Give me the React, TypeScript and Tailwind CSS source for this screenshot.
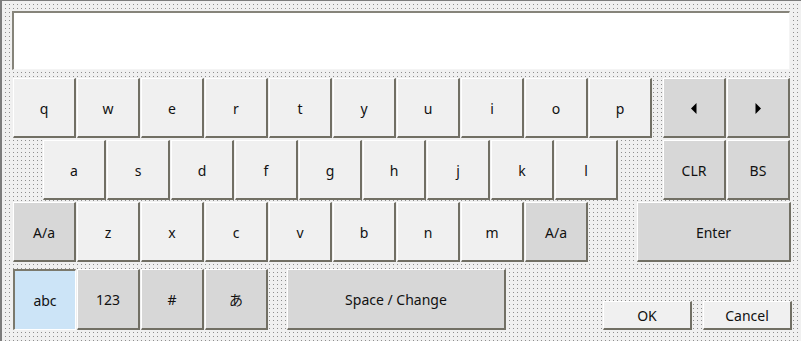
import React from "react";

type KeyProps = {
  label?: React.ReactNode;
  w?: string;
  h?: string;
  tone?: "light" | "dark" | "active";
  className?: string;
};

const Key = ({ label, w = "w-[63px]", h = "h-[60px]", tone = "light", className = "" }: KeyProps) => {
  const fill =
    tone === "dark" ? "bg-[#d7d7d7]" : tone === "active" ? "bg-[#cce4f7]" : "bg-[#f0f0f0]";
  const edge =
    tone === "active"
      ? "border-t-2 border-l-2 border-b border-r border-t-[#7b796d] border-l-[#7b796d] border-b-white border-r-white"
      : "border-t border-l border-b-2 border-r-2 border-t-white border-l-white border-b-[#716f64] border-r-[#716f64]";
  return (
    <div
      className={`${w} ${h} ${fill} ${edge} ${className} shrink-0 flex items-center justify-center pt-[1px] text-[14px] text-[#111]`}
    >
      {label}
    </div>
  );
};

const Arrow = ({ dir }: { dir: "left" | "right" }) => (
  <svg width="6" height="11" viewBox="0 0 6 11">
    {dir === "left" ? <polygon points="5.5,0 5.5,11 0,5.5" fill="#000" /> : <polygon points="0.5,0 0.5,11 6,5.5" fill="#000" />}
  </svg>
);

const row1 = ["q", "w", "e", "r", "t", "y", "u", "i", "o", "p"];
const row2 = ["a", "s", "d", "f", "g", "h", "j", "k", "l"];
const row3 = ["z", "x", "c", "v", "b", "n", "m"];

export default function App() {
  return (
    <div
      className="w-[801px] h-[341px] overflow-hidden border-l-2 border-t border-[#7c7c7c] bg-[#f0f0f0] bg-[linear-gradient(to_right,#f0f0f0_3px,transparent_3px),linear-gradient(to_bottom,#f0f0f0_3px,#8e8e8e_3px)] bg-[length:4px_4px]"
      style={{ fontFamily: '"Noto Sans", "Noto Sans CJK JP", sans-serif' }}
    >
      <div className="pl-[10px] pt-[10px]">
        <div className="w-[778px] h-[59px] bg-white border-t-2 border-l-2 border-b border-r border-t-[#86847a] border-l-[#86847a] border-b-[#f4f4f4] border-r-[#f4f4f4]" />
      </div>

      <div className="flex pl-[11px] pt-[8px]">
        <div className="flex gap-[1px]">
          {row1.map((k) => (
            <Key key={k} label={k} />
          ))}
        </div>
        <div className="flex gap-[1px] ml-[11px]">
          <Key tone="dark" label={<Arrow dir="left" />} />
          <Key tone="dark" label={<Arrow dir="right" />} />
        </div>
      </div>

      <div className="flex pl-[41px] pt-[2px]">
        <div className="flex gap-[1px]">
          {row2.map((k) => (
            <Key key={k} label={k} />
          ))}
        </div>
        <div className="flex gap-[1px] ml-[45px]">
          <Key tone="dark" label="CLR" />
          <Key tone="dark" label="BS" />
        </div>
      </div>

      <div className="flex pl-[11px] pt-[2px]">
        <div className="flex gap-[1px]">
          <Key tone="dark" label="A/a" />
          {row3.map((k) => (
            <Key key={k} label={k} />
          ))}
          <Key tone="dark" label="A/a" />
        </div>
        <Key tone="dark" label="Enter" w="w-[154px]" className="ml-[49px]" />
      </div>

      <div className="flex items-end pl-[11px] pt-[7px]">
        <div className="flex gap-[1px]">
          <Key tone="active" label="abc" h="h-[61px]" />
          <Key tone="dark" label="123" h="h-[61px]" />
          <Key tone="dark" label="#" h="h-[61px]" />
          <Key tone="dark" label="あ" h="h-[61px]" />
        </div>
        <Key tone="dark" label="Space / Change" w="w-[219px]" h="h-[61px]" className="ml-[19px]" />
        <Key label="OK" w="w-[89px]" h="h-[29px]" className="ml-[97px]" />
        <Key label="Cancel" w="w-[89px]" h="h-[29px]" className="ml-[11px]" />
      </div>
    </div>
  );
}
